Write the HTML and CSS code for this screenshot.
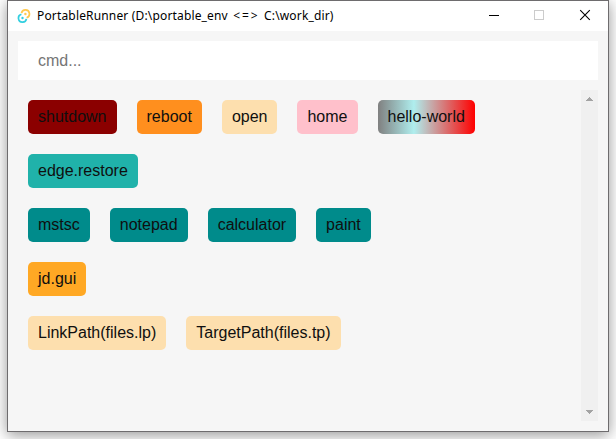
FILE: index.html
```html
<!DOCTYPE html>
<html lang="en">
<head>
<meta charset="utf-8">
<title>PortableRunner</title>
<link rel="stylesheet" href="styles.css">
</head>
<body>
<div class="window">
  <header class="titlebar">
    <svg class="logo" width="14" height="14" viewBox="0 0 14 14" fill="none" stroke-width="1.7">
      <path d="M4.5 4.1A4 4 0 1 1 9.6 8.7" stroke="#ffc94f"/>
      <path d="M9.4 9.9A4 4 0 1 1 4.4 5.3" stroke="#33cfe0"/>
      <circle cx="8.4" cy="5" r="1.2" fill="#ffc94f"/>
      <circle cx="5.5" cy="9" r="1.2" fill="#33cfe0"/>
    </svg>
    <span class="title">PortableRunner (D:\portable_env <span class="link">&lt;=&gt;</span> C:\work_dir)</span>
    <svg class="controls" width="138" height="30" viewBox="0 0 138 30" fill="none" shape-rendering="crispEdges">
      <path d="M19 14.5h10" stroke="#000"/>
      <rect x="64.5" y="9.5" width="9" height="9" stroke="#ccc"/>
      <path d="M110.2 9.2l9.6 9.6M119.8 9.2l-9.6 9.6" stroke="#000" stroke-width="1.1" shape-rendering="auto"/>
    </svg>
  </header>
  <main class="content">
    <input class="command" type="text" placeholder="cmd...">
    <div class="panel">
      <div class="rows">
        <div class="row">
          <span class="chip shutdown">shutdown</span>
          <span class="chip reboot">reboot</span>
          <span class="chip wheat">open</span>
          <span class="chip home">home</span>
          <span class="chip hello">hello-world</span>
        </div>
        <div class="row"><span class="chip edge">edge.restore</span></div>
        <div class="row">
          <span class="chip system">mstsc</span>
          <span class="chip system">notepad</span>
          <span class="chip system">calculator</span>
          <span class="chip system">paint</span>
        </div>
        <div class="row"><span class="chip gui">jd.gui</span></div>
        <div class="row">
          <span class="chip wheat">LinkPath(files.lp)</span>
          <span class="chip wheat">TargetPath(files.tp)</span>
        </div>
      </div>
      <div class="scrollbar">
        <svg width="7" height="4" viewBox="0 0 7 4" fill="#a3a3a3" shape-rendering="crispEdges"><path d="M3 0h1v1h1v1h1v1h1v1H0V3h1V2h1V1h1z"/></svg>
        <svg width="7" height="4" viewBox="0 0 7 4" fill="#a3a3a3" shape-rendering="crispEdges"><path d="M0 0h7v1H6v1H5v1H4v1H3V3H2V2H1V1H0z"/></svg>
      </div>
    </div>
  </main>
</div>
</body>
</html>
```

FILE: styles.css
```css
* { box-sizing: border-box; }
body {
  margin: 0;
  height: 439px;
  padding: 0 7px 7px;
  overflow: hidden;
  background: #fff;
  font-family: "Liberation Sans", Arial, sans-serif;
}
.window {
  display: flex;
  flex-direction: column;
  width: 602px;
  height: 432px;
  border: 1px solid #6e6c6e;
  background: #f6f6f6;
  box-shadow: 0 3px 14px rgba(0, 0, 0, .42);
}
.titlebar {
  display: flex;
  align-items: center;
  height: 30px;
  padding-left: 9px;
  background: #fff;
}
.logo { margin-right: 6px; }
.title {
  font: 12px/30px "Noto Sans", sans-serif;
  letter-spacing: .16px;
  color: #000;
  white-space: nowrap;
}
.link {
  margin: 0 1px 0 2px;
  letter-spacing: 2px;
}
.controls { margin-left: auto; }
.content {
  flex: 1;
  display: flex;
  flex-direction: column;
  gap: 10px;
  padding: 10px;
}
.command {
  display: block;
  width: 100%;
  height: 39px;
  padding: 0 20px;
  border: 0;
  background: #fff;
  font: 16px "Liberation Sans", Arial, sans-serif;
}
.command::placeholder { color: #757575; }
.panel {
  flex: 1;
  display: flex;
  justify-content: space-between;
}
.rows {
  display: flex;
  flex-direction: column;
  gap: 20px;
  padding: 10px;
}
.row { display: flex; gap: 20px; }
.chip {
  height: 34px;
  padding: 0 10px;
  border-radius: 5px;
  font-size: 16px;
  line-height: 34px;
  color: #0f0f0f;
  white-space: nowrap;
}
.shutdown { background: #8b0000; }
.reboot { background: #ff8f1e; }
.wheat { background: #fddfae; }
.home { background: #ffc0cb; }
.hello { background: linear-gradient(90deg, #808080, #afeeee 37%, #ff0000); }
.edge { background: #20b2aa; }
.system { background: #008b8b; }
.gui { background: #ffa824; }
.scrollbar {
  display: flex;
  flex-direction: column;
  justify-content: space-between;
  align-items: center;
  width: 17px;
  padding: 7px 0;
  background: #f0f0f0;
}
```
